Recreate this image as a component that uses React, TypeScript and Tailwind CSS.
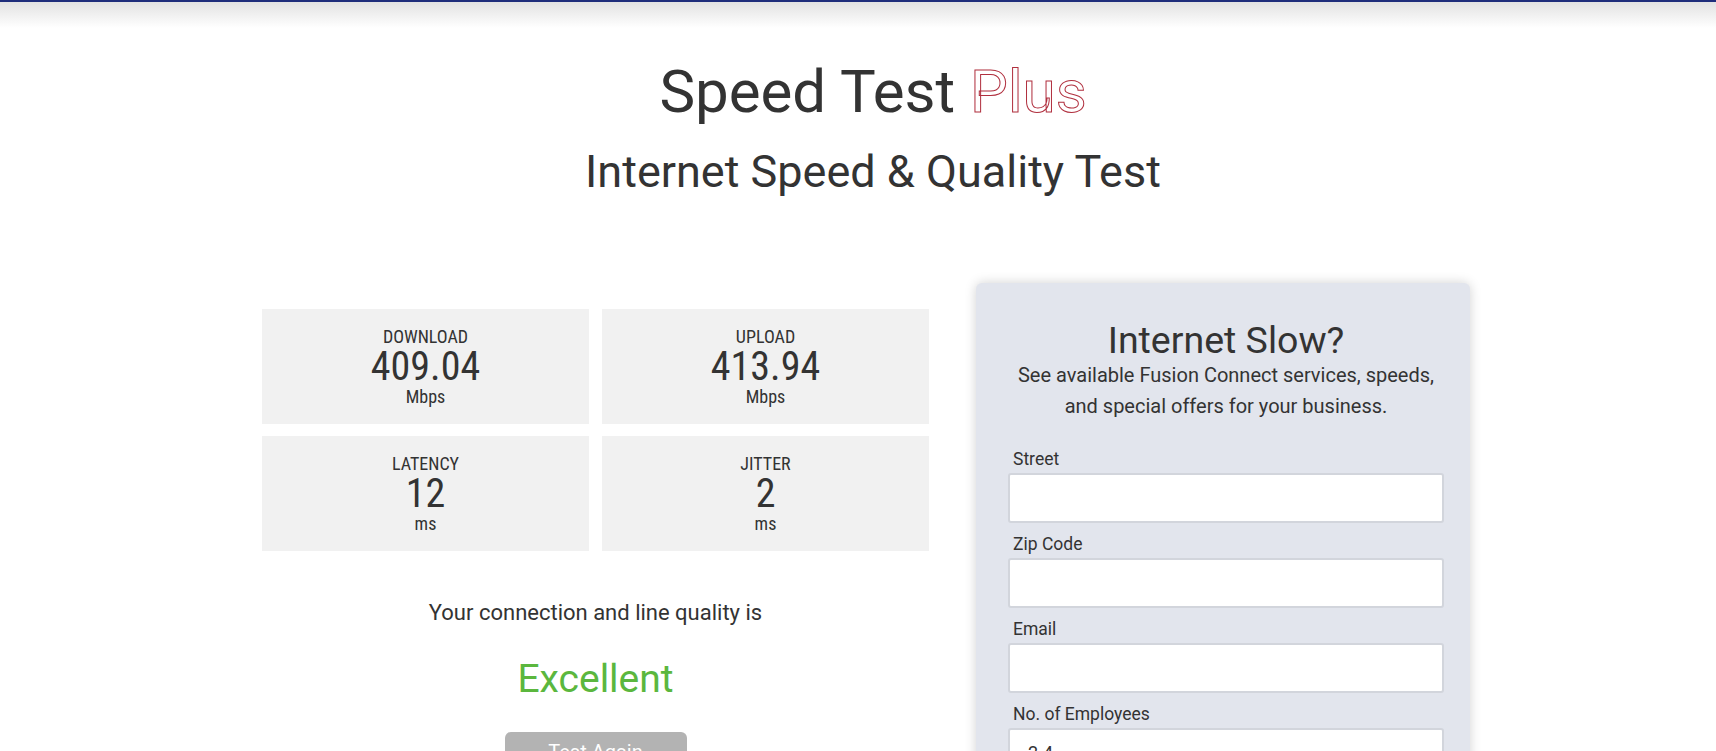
import React from "react";

const stats = [
  { label: "DOWNLOAD", value: "409.04", unit: "Mbps" },
  { label: "UPLOAD", value: "413.94", unit: "Mbps" },
  { label: "LATENCY", value: "12", unit: "ms" },
  { label: "JITTER", value: "2", unit: "ms" },
];

const fields = ["Street", "Zip Code", "Email", "No. of Employees"];

const StatBox = ({ label, value, unit }: { label: string; value: string; unit: string }) => (
  <div className="h-[115px] bg-[#f1f1f1] flex flex-col items-center justify-center text-[#333] font-stretch-condensed">
    <span className="text-[18px] leading-[20px]">{label}</span>
    <span className="text-[40px] leading-[40px]">{value}</span>
    <span className="text-[18px] leading-[20px]">{unit}</span>
  </div>
);

export default function App() {
  return (
    <div className="w-[1716px] h-[751px] overflow-hidden bg-white font-['Roboto',sans-serif] text-[#333]">
      <div className="h-[2px] bg-[#1f2d7b]" />
      <div className="h-[26px] bg-gradient-to-b from-[#e2e2e2] to-white" />

      <header className="flex flex-col items-center pl-[30px]">
        <h1 className="mt-[30px] text-[60px] leading-[68px] font-normal">
          Speed Test{" "}
          <span className="text-transparent [-webkit-text-stroke:1px_#b02f3e]">Plus</span>
        </h1>
        <h2 className="mt-[18px] text-[45px] leading-[56px] font-normal">Internet Speed &amp; Quality Test</h2>
      </header>

      <main className="flex pl-[262px] gap-[47px] mt-[83px]">
        <section className="w-[667px] mt-[26px] flex flex-col items-center">
          <div className="w-full grid grid-cols-2 gap-x-[13px] gap-y-[12px]">
            {stats.map((s) => (
              <StatBox key={s.label} {...s} />
            ))}
          </div>
          <p className="mt-[47px] text-[22px] leading-[30px]">Your connection and line quality is</p>
          <p className="mt-[28px] text-[39px] leading-[46px] text-[#5bb73e]">Excellent</p>
          <button className="mt-[30px] w-[182px] h-[40px] rounded-[6px] bg-[#b3b3b3] text-white text-[20px] leading-[40px]">
            Test Again
          </button>
        </section>

        <aside className="w-[494px] h-[520px] rounded-[6px] bg-[#e2e5ed] shadow-[0_0_12px_rgba(0,0,0,0.18)] pl-[32px] pr-[26px] pt-[37px]">
          <div className="flex flex-col items-center">
            <h3 className="text-[37.5px] leading-[40px] font-normal">Internet Slow?</h3>
            <p className="text-[20px] leading-[30.5px] text-center">
              See available Fusion Connect services, speeds,
              <br />
              and special offers for your business.
            </p>
          </div>
          <form className="mt-[27px] flex flex-col">
            {fields.map((f) => (
              <label key={f} className="flex flex-col">
                <span className="pl-[5px] text-[17.5px] leading-[22px] mb-[3px]">{f}</span>
                <span className="h-[50px] rounded-[3px] border-2 border-[#d2d5dc] bg-white mb-[10px] pl-[18px] text-[18px] leading-[46px] text-[#333]">
                  {f === "No. of Employees" ? "2-4" : ""}
                </span>
              </label>
            ))}
          </form>
        </aside>
      </main>
    </div>
  );
}
